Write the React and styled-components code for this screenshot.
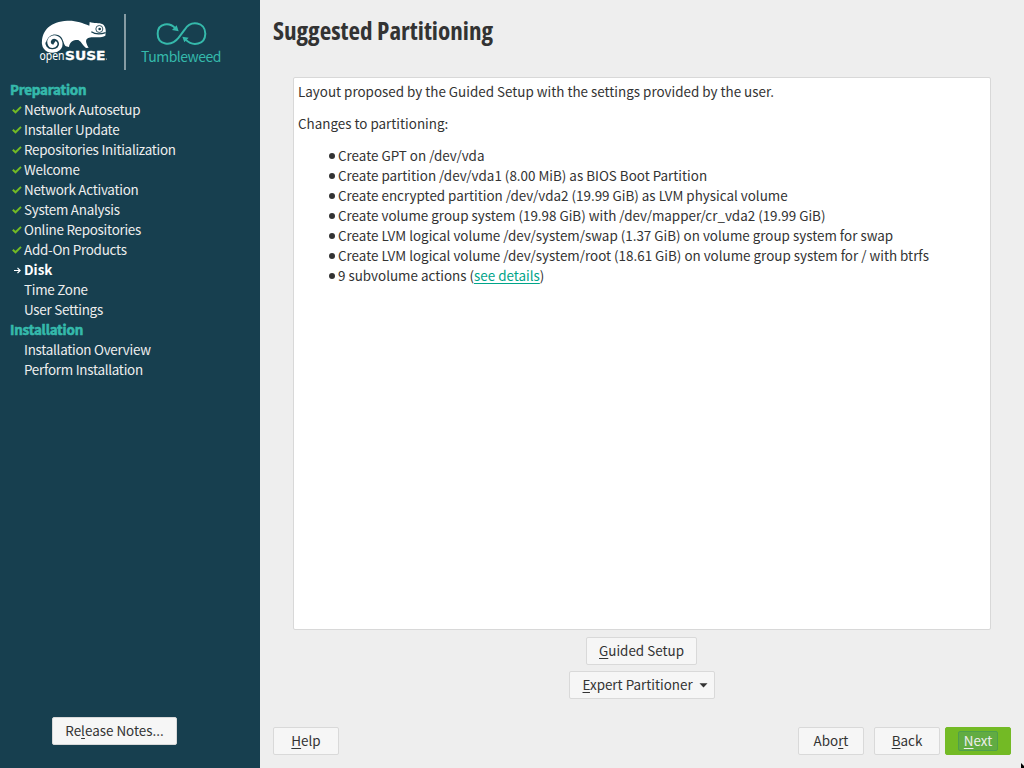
import React from "react";
import styled, { createGlobalStyle } from "styled-components";

const Global = createGlobalStyle`
  * { box-sizing: border-box; }
  body { margin: 0; font-family: "Noto Sans CJK SC", "Noto Sans", sans-serif; font-size: 13.41px; line-height: 20px; color: #333; }
`;
const Window = styled.div`display: flex; width: 1024px; height: 768px; overflow: hidden; background: #eee; position: relative;`;
const Sidebar = styled.aside`width: 260px; background: #173f4f; color: #eee; display: flex; flex-direction: column; padding-bottom: 23px;`;
const Logo = styled.svg`display: block; width: 260px; height: 79px; flex: none;`;
const Steps = styled.nav`flex: 1; padding-left: 10px;`;
const Heading = styled.div`color: #35b9ab; font-weight: 700; height: 20px; white-space: nowrap; letter-spacing: -0.2px; -webkit-text-stroke: 0.6px #35b9ab;`;
const Step = styled.div`display: flex; height: 20px; white-space: nowrap; letter-spacing: ${p => (p.$now ? 0 : -0.26)}px; color: ${p => (p.$now ? "#fff" : "#eee")}; font-weight: ${p => (p.$now ? 700 : 400)};`;
const Mark = styled.svg`width: 14px; height: 20px; flex: none;`;
const Main = styled.main`flex: 1; display: flex; flex-direction: column; padding: 0 13px 13px;`;
const Title = styled.h1`margin: 0; height: 77px; padding-top: 13px; font: 700 25.15px/34px "Open Sans", sans-serif; font-stretch: 75%; white-space: nowrap;`;
const Panel = styled.section`margin: 0 20px; height: 553px; background: #fff; border: 1px solid #d8d8d8; border-radius: 2px; padding: 3px 4px; white-space: nowrap;`;
const Para = styled.p`margin: 0 0 12px; height: 20px;`;
const Item = styled.div`display: flex; align-items: center; padding-left: 31px; height: 20px;
  &::before { content: ""; width: 6px; height: 6px; margin: 2px 3px 0 0; border-radius: 50%; background: #333; }`;
const Link = styled.a`color: #00a489; text-decoration: underline; text-decoration-thickness: 1px; text-underline-offset: 2px; text-decoration-skip-ink: none;`;
const Actions = styled.div`display: flex; flex-direction: column; align-items: center; gap: 6px; padding-top: 7px;`;
const Footer = styled.footer`display: flex; margin-top: auto;`;
const Button = styled.button`width: ${p => p.$w}px; height: 28px; padding: 0 0 2px; display: flex; align-items: center; justify-content: center; font: inherit; color: ${p => (p.$primary ? "#eee" : "#333")}; background: ${p => (p.$primary ? "#73ba25" : "#f6f6f6")}; border: 1px solid ${p => (p.$primary ? "#73ba25" : "#d9d9d9")}; border-radius: 2px; white-space: nowrap;`;
const GuidedButton = styled(Button)`margin-right: 1px;`;
const MenuButton = styled(Button)`justify-content: space-between; padding: 0 6px 2px 12.5px;`;
const Release = styled.div`padding-left: 52px;`;
const Spacer = styled.div`flex: 1;`;
const Gap = styled.div`width: ${p => p.$w}px;`;
const Key = styled.span`text-decoration: underline; text-underline-offset: 2px; text-decoration-thickness: 1px;`;
const Focus = styled.span`border: 1px solid #4f9f4c; border-radius: 2px; background: #61ac42; height: 20px; width: 40px; line-height: 16px; margin-top: 2px;`;
const Arrow = styled.svg`width: 9px; height: 5px; margin-top: 2px;`;
const Cursor = styled.svg`position: absolute; right: 0; bottom: 0; width: 3px; height: 5px;`;

const done = ["Network Autosetup", "Installer Update", "Repositories Initialization", "Welcome", "Network Activation", "System Analysis", "Online Repositories", "Add-On Products"];
const changes = ["Create GPT on /dev/vda", "Create partition /dev/vda1 (8.00 MiB) as BIOS Boot Partition", "Create encrypted partition /dev/vda2 (19.99 GiB) as LVM physical volume", "Create volume group system (19.98 GiB) with /dev/mapper/cr_vda2 (19.99 GiB)", "Create LVM logical volume /dev/system/swap (1.37 GiB) on volume group system for swap", "Create LVM logical volume /dev/system/root (18.61 GiB) on volume group system for / with btrfs"];

function Brand() {
  return (
    <Logo viewBox="0 0 260 79">
      <g transform="translate(30 5) scale(.33333)">
        {/* chameleon body, legs and head */}
        <path fill="#fff" d="M36 112C36 76 62 49 112 47C138 46 158 54 178 62L179 51C192 56 207 52 218 58C227 64 229 77 226 92C212 101 194 94 177 98C166 101 165 110 176 128L168 129C158 121 156 112 145 105C132 104 119 109 117 126L108 124C101 119 101 107 95 98C82 82 55 86 48 112Z" />
        {/* curled tail */}
        <path fill="none" stroke="#fff" strokeWidth="10.5" d="M42 105C37 123 49 138 66 138C83 139 95 127 92 113C89 98 73 92 62 100C53 108 57 123 68 124C76 124 80 116 74 112" />
        <path fill="none" stroke="#173f4f" strokeWidth="3.5" d="M184 80C195 88 212 88 227 83" />
        <circle cx="208" cy="72" r="10.5" fill="#fff" stroke="#173f4f" strokeWidth="2.6" />
        <circle cx="209" cy="72" r="4" fill="#173f4f" />
        {/* divider */}
        <path d="M285 27V195" stroke="#9eafb5" strokeWidth="5" />
        {/* infinity loop with two arrow heads */}
        <path fill="none" stroke="#35b9ab" strokeWidth="6" d="M436 70C420 52 384 52 383 86C383 119 423 127 446 98L464 74C482 44 526 50 526 86C525 119 489 126 467 104" />
        <path fill="#35b9ab" d="M446 79L426 75L440 61ZM457 95L476 98L463 112Z" />
      </g>
      <text x="39.5" y="60" fill="#fff" fontFamily="Noto Sans" fontSize="12" textLength="25" lengthAdjust="spacingAndGlyphs">open</text>
      <text x="65" y="60" fill="#fff" stroke="#fff" strokeWidth=".3" fontFamily="DejaVu Sans" fontWeight="700" fontSize="12" textLength="40.5" lengthAdjust="spacingAndGlyphs">SUSE</text>
      <circle cx="106.5" cy="59" r=".5" fill="#fff" />
      <text x="141" y="61.5" fill="#35b9ab" fontFamily="Noto Sans CJK SC" fontSize="14" textLength="80.5">Tumbleweed</text>
    </Logo>
  );
}

export default function App() {
  return (
    <><Global />
      <Window>
        <Sidebar>
          <Brand />
          <Steps>
            <Heading>Preparation</Heading>
            {done.map(t => <Step key={t}><Mark viewBox="0 0 14 20"><path d="M2.8 10.7l2.7 2.6L11 7.9" fill="none" stroke="#73ba25" strokeWidth="2" /></Mark>{t}</Step>)}
            <Step $now><Mark viewBox="0 0 14 20"><path d="M4 11.5h6M7.5 8.9l2.6 2.6-2.6 2.6" fill="none" stroke="#fff" strokeWidth="1.2" /></Mark>Disk</Step>
            <Step><Mark />Time Zone</Step>
            <Step><Mark />User Settings</Step>
            <Heading>Installation</Heading>
            <Step><Mark />Installation Overview</Step>
            <Step><Mark />Perform Installation</Step>
          </Steps>
          <Release><Button $w={125}>Re<Key>l</Key>ease Notes...</Button></Release>
        </Sidebar>
        <Main>
          <Title>Suggested Partitioning</Title>
          <Panel>
            <Para>Layout proposed by the Guided Setup with the settings provided by the user.</Para>
            <Para>Changes to partitioning:</Para>
            {changes.map(t => <Item key={t}>{t}</Item>)}
            <Item>9 subvolume actions (<Link>see details</Link>)</Item>
          </Panel>
          <Actions>
            <GuidedButton $w={111}><Key>G</Key>uided Setup</GuidedButton>
            <MenuButton $w={146}><span><Key>E</Key>xpert Partitioner</span><Arrow viewBox="0 0 9 5"><path d="M.5 .3h8L4.5 4.5z" fill="#333" /></Arrow></MenuButton>
          </Actions>
          <Footer>
            <Button $w={66}><Key>H</Key>elp</Button><Spacer />
            <Button $w={66}>Abo<Key>r</Key>t</Button><Gap $w={10} />
            <Button $w={66}><Key>B</Key>ack</Button><Gap $w={5} />
            <Button $w={66} $primary><Focus><Key>N</Key>ext</Focus></Button>
          </Footer>
        </Main>
        <Cursor viewBox="0 0 3 5"><path d="M0 0L3 3V5H0Z" fill="#000" /></Cursor>
      </Window>
    </>
  );
}
